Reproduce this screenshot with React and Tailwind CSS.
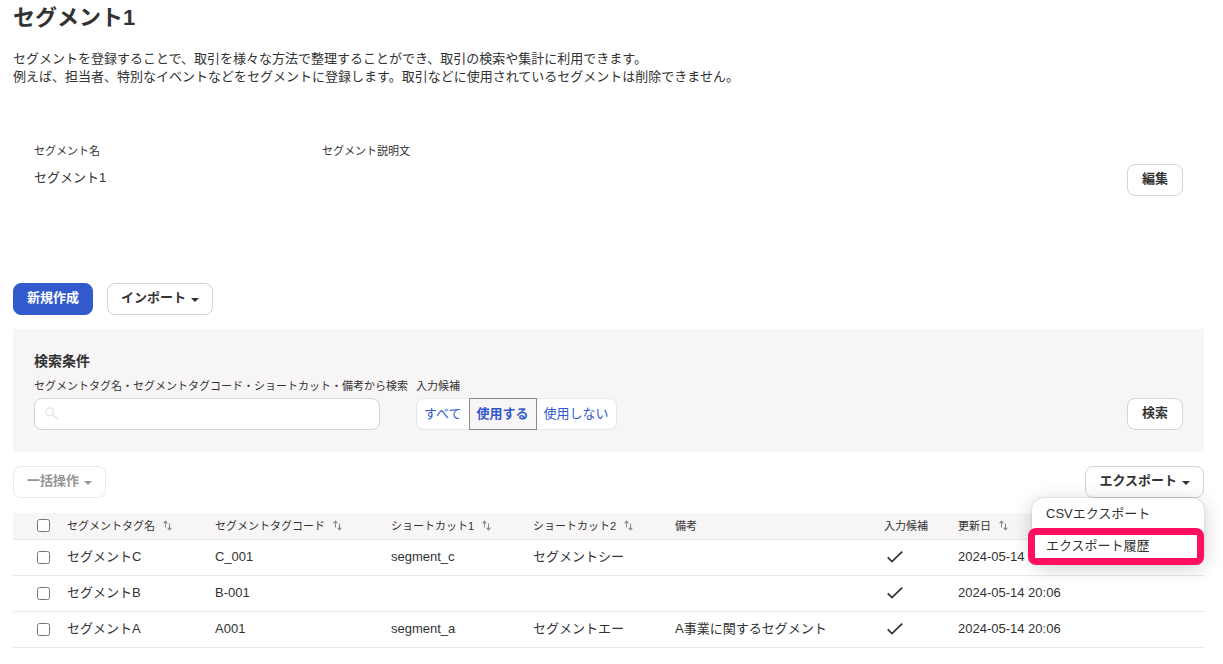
import React, { useState } from 'react';
import clsx from 'clsx';

const columns = [
  { key: 'name', label: 'セグメントタグ名', sortable: true, width: 'w-[148px]' },
  { key: 'code', label: 'セグメントタグコード', sortable: true, width: 'w-[176px]' },
  { key: 'shortcut1', label: 'ショートカット1', sortable: true, width: 'w-[142px]' },
  { key: 'shortcut2', label: 'ショートカット2', sortable: true, width: 'w-[142px]' },
  { key: 'note', label: '備考', sortable: false, width: 'w-[209px]' },
  { key: 'available', label: '入力候補', sortable: false, width: 'w-[74px]' },
  { key: 'updatedAt', label: '更新日', sortable: true, width: '' },
];

const tags = [
  { name: 'セグメントC', code: 'C_001', shortcut1: 'segment_c', shortcut2: 'セグメントシー', note: '', available: true, updatedAt: '2024-05-14 20:06' },
  { name: 'セグメントB', code: 'B-001', shortcut1: '', shortcut2: '', note: '', available: true, updatedAt: '2024-05-14 20:06' },
  { name: 'セグメントA', code: 'A001', shortcut1: 'segment_a', shortcut2: 'セグメントエー', note: 'A事業に関するセグメント', available: true, updatedAt: '2024-05-14 20:06' },
];

const filters = ['すべて', '使用する', '使用しない'];

const Caret = () => (
  <svg className="mt-1" width="8" height="4" viewBox="0 0 8 4" fill="currentColor" aria-hidden="true">
    <path d="M0 0h8L4 4z" />
  </svg>
);

const SortIcon = () => (
  <svg width="9" height="11" viewBox="0 0 9 11" aria-hidden="true">
    <path d="M2.5 7.5v-6M6.5 3.5v6" fill="none" stroke="#8c8989" />
    <path d="M0 3.2L2.5.2 5 3.2zM4 7.8h5l-2.5 3z" fill="#8c8989" />
  </svg>
);

const CheckIcon = () => (
  <svg width="16" height="12" viewBox="0 0 16 12" fill="none" stroke="#323232" strokeWidth="1.8" aria-hidden="true">
    <path d="M.7 6.3l4.3 4.3L15.2.7" />
  </svg>
);

const SearchIcon = () => (
  <svg
    className="absolute left-[11px] top-[9px]"
    width="13"
    height="13"
    viewBox="0 0 13 13"
    fill="none"
    stroke="#e9e7e7"
    strokeWidth="1.6"
    aria-hidden="true"
  >
    <circle cx="4.8" cy="4.8" r="3.8" />
    <path d="M7.6 7.6l4.8 4.8" />
  </svg>
);

const Button = ({ primary, compact, className, children, ...props }) => (
  <button
    type="button"
    className={clsx(
      'flex h-8 items-center gap-[5px] rounded-lg border pb-0.5 font-bold whitespace-nowrap',
      primary ? 'border-[#325acc] bg-[#325acc] text-white' : 'border-[#d7d2d2] bg-white',
      compact ? 'px-[13px]' : 'px-3.5',
      'disabled:border-[#ebe9e9] disabled:text-[#989494]',
      className
    )}
    {...props}
  >
    {children}
  </button>
);

const ExportMenu = () => {
  const [open, setOpen] = useState(true);

  return (
    <div className="relative">
      <Button compact aria-expanded={open} onClick={() => setOpen(!open)}>
        エクスポート
        <Caret />
      </Button>
      {open && (
        <ul className="absolute top-8 right-0 z-10 w-[172px] rounded-xl bg-white shadow-[0_0_2px_rgba(0,0,0,0.2),0_4px_20px_rgba(0,0,0,0.2)]">
          <li>
            <button type="button" className="block w-full px-3.5 py-[7px] text-left">
              CSVエクスポート
            </button>
          </li>
          <li className="relative">
            <button type="button" className="block w-full px-3.5 pt-[7px] pb-2 text-left">
              エクスポート履歴
            </button>
            <span className="pointer-events-none absolute -top-0.5 right-0 -bottom-0.5 -left-1 rounded-lg border-[7px] border-[#ff0f5f]" />
          </li>
        </ul>
      )}
    </div>
  );
};

const SearchPanel = () => {
  const [keyword, setKeyword] = useState('');
  const [filter, setFilter] = useState('使用する');

  return (
    <section className="mt-3.5 bg-[#f7f5f5] px-[21px] pt-[21px] pb-[22px]">
      <h2 className="mb-[5px] text-[14px] leading-[22px] font-bold">検索条件</h2>
      <div className="flex items-end">
        <div className="w-[382px]">
          <label htmlFor="keyword" className="block text-[11px] whitespace-nowrap">
            セグメントタグ名・セグメントタグコード・ショートカット・備考から検索
          </label>
          <div className="relative mt-[3px] w-[346px]">
            <SearchIcon />
            <input
              id="keyword"
              type="text"
              value={keyword}
              onChange={(e) => setKeyword(e.target.value)}
              className="block h-8 w-full rounded-lg border border-[#d7d2d2] bg-white pr-2 pl-8"
            />
          </div>
        </div>
        <div>
          <div id="filter-label" className="text-[11px]">入力候補</div>
          <div role="group" aria-labelledby="filter-label" className="mt-[3px] flex">
            {filters.map((item) => (
              <button
                key={item}
                type="button"
                aria-pressed={filter === item}
                onClick={() => setFilter(item)}
                className={clsx(
                  'h-8 border px-[7px] text-[#325acc] first:rounded-l-lg last:rounded-r-lg',
                  filter === item
                    ? 'border-[#8c8989] bg-[#f7f5f5] font-bold'
                    : 'border-[#e9e7e7] bg-white first:border-r-0 last:border-l-0'
                )}
              >
                {item}
              </button>
            ))}
          </div>
        </div>
        <Button className="ml-auto">検索</Button>
      </div>
    </section>
  );
};

const TagTable = () => {
  const [selected, setSelected] = useState([]);

  const toggle = (code) => {
    setSelected(selected.includes(code) ? selected.filter((c) => c !== code) : [...selected, code]);
  };

  const toggleAll = () => {
    setSelected(selected.length === tags.length ? [] : tags.map((tag) => tag.code));
  };

  return (
    <table className="mt-[15px] w-full table-fixed text-left whitespace-nowrap">
      <thead>
        <tr className="h-[26px] border-b border-[#e9e7e7] bg-[#f7f5f5] text-[11px]">
          <th className="w-[47px] pr-[10px] text-right">
            <input
              type="checkbox"
              aria-label="すべて選択"
              checked={selected.length === tags.length}
              onChange={toggleAll}
              className="ml-auto block size-[13px]"
            />
          </th>
          {columns.map((column) => (
            <th key={column.key} className={clsx('px-[7px] font-normal', column.width)}>
              {column.sortable ? (
                <button type="button" className="flex items-center gap-2">
                  {column.label}
                  <SortIcon />
                </button>
              ) : (
                column.label
              )}
            </th>
          ))}
        </tr>
      </thead>
      <tbody>
        {tags.map((tag) => (
          <tr key={tag.code} className="h-9 border-b border-[#e9e7e7]">
            <td className="pr-[10px]">
              <input
                type="checkbox"
                aria-label={tag.name}
                checked={selected.includes(tag.code)}
                onChange={() => toggle(tag.code)}
                className="ml-auto block size-[13px]"
              />
            </td>
            {columns.map((column) => (
              <td key={column.key} className="px-[7px]">
                {column.key === 'available' ? (
                  <span className="block px-[3px]">{tag.available && <CheckIcon />}</span>
                ) : (
                  tag[column.key]
                )}
              </td>
            ))}
          </tr>
        ))}
      </tbody>
    </table>
  );
};

const App = () => {
  return (
    <main className="min-h-screen bg-white pt-px pr-[19px] pl-[13px] font-['Liberation_Sans','Noto_Sans_CJK_JP',sans-serif] text-[13px] leading-[18px] text-[#323232]">
      <h1 className="text-[22px] leading-[34px] font-bold">セグメント1</h1>
      <p className="mt-[15px]">
        セグメントを登録することで、取引を様々な方法で整理することができ、取引の検索や集計に利用できます。
        <br />
        例えば、担当者、特別なイベントなどをセグメントに登録します。取引などに使用されているセグメントは削除できません。
      </p>

      <section className="mt-[35px] flex items-end px-[21px] py-[21px]">
        <dl className="flex flex-1 pb-[9px]">
          <div className="w-72">
            <dt className="text-[11px]">セグメント名</dt>
            <dd className="mt-[9px]">セグメント1</dd>
          </div>
          <div className="flex-1">
            <dt className="text-[11px]">セグメント説明文</dt>
            <dd className="mt-[9px]" />
          </div>
        </dl>
        <Button>編集</Button>
      </section>

      <div className="mt-[66px] flex gap-3.5">
        <Button primary compact>新規作成</Button>
        <Button compact>
          インポート
          <Caret />
        </Button>
      </div>

      <SearchPanel />

      <div className="mt-3.5 flex items-center justify-between">
        <Button compact disabled>
          一括操作
          <Caret />
        </Button>
        <ExportMenu />
      </div>

      <TagTable />
    </main>
  );
};

export default App;
